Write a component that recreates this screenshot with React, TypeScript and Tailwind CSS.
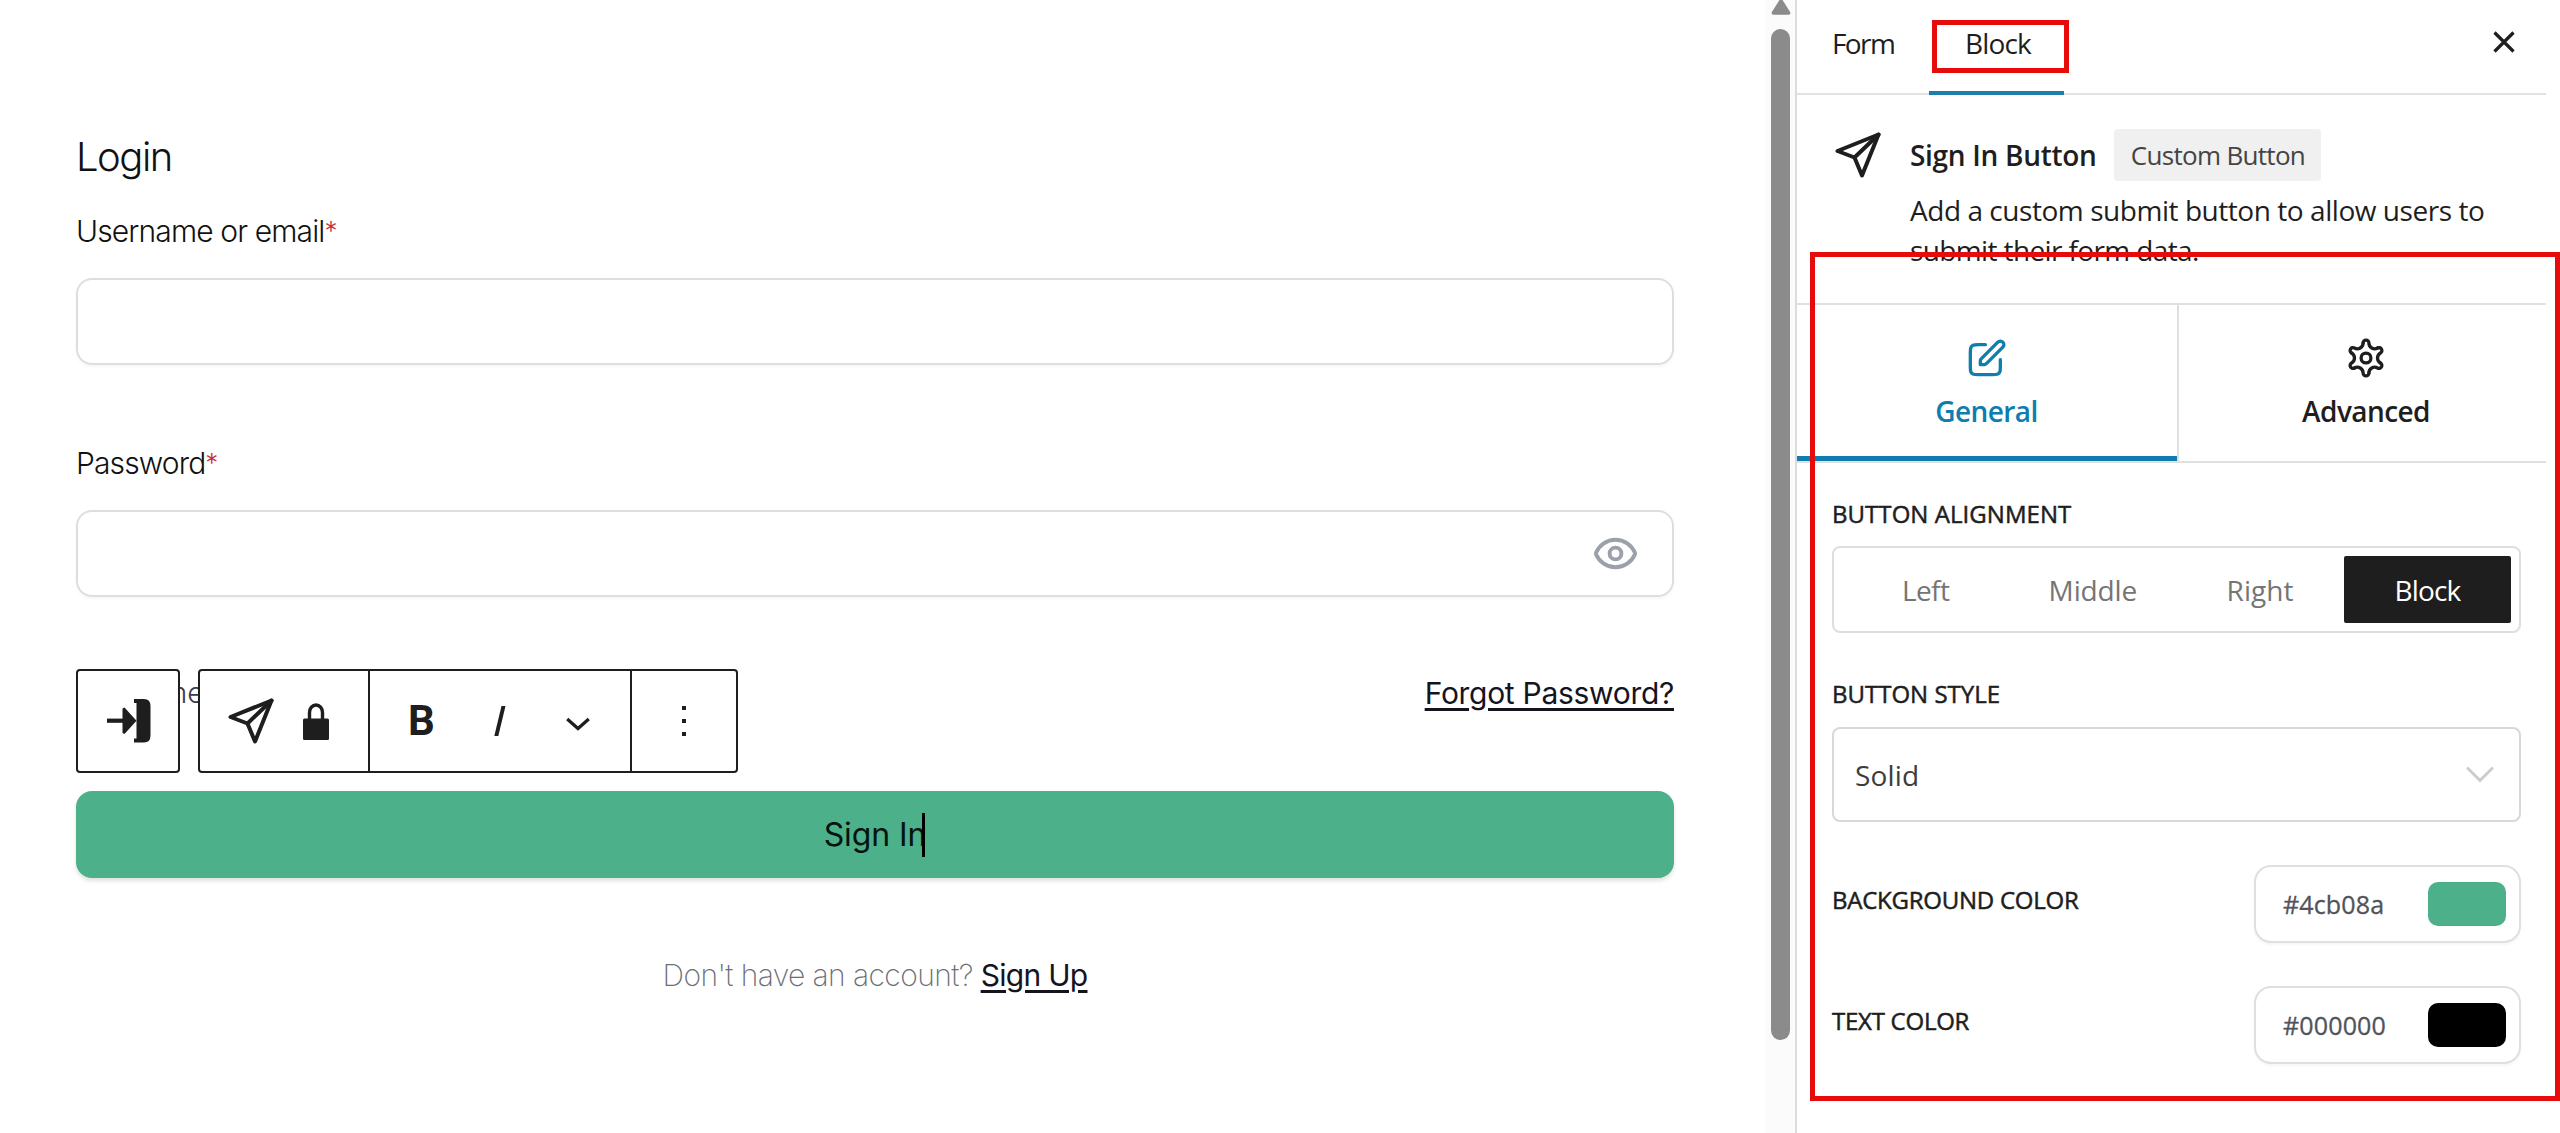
import { Eye } from "lucide-react";
import clsx from "clsx";

function PlaneIcon() {
  return (
    <svg viewBox="0 0 46 46" className="w-[46px] h-[46px] shrink-0" fill="none" stroke="#1e1e1e" strokeWidth="4" strokeLinejoin="round" strokeLinecap="round">
      <path d="M43.5 2.5 L2.5 19 L19.5 25.5 L27 43.5 Z" />
      <path d="M19.5 25.5 L43.5 2.5" />
    </svg>
  );
}

function LoginIcon() {
  return (
    <svg viewBox="0 0 44 44" className="ml-px w-[44px] h-[44px]" fill="#1e1e1e">
      <path d="M0 19.6h16.5v4.2H0z" />
      <path d="M15.5 9.5 17.5 8.4 29.5 21.7 17.5 35 15.5 34z" />
      <path d="M27 0h10q6.5 0 6.5 7v29.5q0 7-6.5 7H27v-4h2.500V4H27z" />
    </svg>
  );
}

function LockIcon() {
  return (
    <svg viewBox="0 0 26 37" className="w-[26px] h-[37px]">
      <path d="M6.500 17V9.500a6.500 7.500 0 0 1 13 0V17" fill="none" stroke="#1e1e1e" strokeWidth="3.400" />
      <rect y="15.500" width="26" height="21.500" rx="1.500" fill="#1e1e1e" />
    </svg>
  );
}

function EditIcon() {
  return (
    <svg viewBox="0 0 24 24" className="w-[40px] h-[40px]" fill="none" stroke="currentColor" strokeWidth="2" strokeLinecap="round" strokeLinejoin="round">
      <path d="M11 4H6.800C5.120 4 4.280 4 3.638 4.327a3 3 0 0 0-1.311 1.311C2 6.280 2 7.120 2 8.800v8.400c0 1.680 0 2.520.327 3.162a3 3 0 0 0 1.311 1.311C4.280 22 5.120 22 6.800 22h8.400c1.680 0 2.520 0 3.162-.327a3 3 0 0 0 1.311-1.311C20 19.720 20 18.880 20 17.200V13" />
      <path d="M8 16h1.675c.489 0 .733 0 .964-.055a2 2 0 0 0 .578-.240c.201-.123.374-.296.720-.642L21.500 5.500a2.121 2.121 0 0 0-3-3L8.937 12.063c-.346.346-.519.519-.642.720a2 2 0 0 0-.240.578C8 13.592 8 13.836 8 14.325V16Z" />
    </svg>
  );
}

// one lobe plus the valley to the next, repeated every 60deg
function GearIcon() {
  return (
    <svg viewBox="-20 -20 40 40" className="w-[40px] h-[40px]" fill="none" stroke="currentColor" strokeWidth="3.300" strokeLinecap="round">
      {[0, 60, 120, 180, 240, 300].map((deg) => (
        <path key={deg} transform={`rotate(${deg})`} d="M-2.900-15a2.900 2.900 0 0 1 5.800 0C2.900-10.500 7.640-7.760 11.540-10.010" />
      ))}
      <circle r="4.900" />
    </svg>
  );
}

function Field({ label, className, children }: { label: string; className?: string; children?: React.ReactNode }) {
  return (
    <div className={className}>
      <div className="flex h-9 items-center text-[30px] font-light leading-9 text-[#111]">
        <span className="tracking-[-0.87px]">{label}</span>
        <span className="text-[26px] text-[#c5303c]">*</span>
      </div>
      <div className="mt-[29px] flex h-[87px] items-center justify-end rounded-[16px] border-2 border-[#dedede] pr-[33px] shadow-[0_2px_3px_rgba(0,0,0,0.04)]">
        {children}
      </div>
    </div>
  );
}

function Toolbar() {
  return (
    <div className="absolute left-0 -top-[6px] flex h-[104px] gap-[18px]">
      <div className="flex w-[104px] items-center justify-center rounded-[4px] border-2 border-[#1e1e1e] bg-white">
        <LoginIcon />
      </div>
      <div className="flex w-[540px] rounded-[4px] border-2 border-[#1e1e1e] bg-white">
        <div className="flex w-[170px] items-center border-r-2 border-[#1e1e1e] pl-[28px]">
          <PlaneIcon />
          <span className="ml-[29px]">
            <LockIcon />
          </span>
        </div>
        <div className="flex w-[262px] items-center border-r-2 border-[#1e1e1e] pl-[38px]">
          <span className="w-[24px] font-['Roboto',sans-serif] text-[42px] font-bold leading-none text-[#1e1e1e]">B</span>
          <svg viewBox="0 0 12 30" className="ml-[62px] h-[30px] w-[12px]">
            <path d="M7.500 0H11.500L4.300 30H0.300z" fill="#1e1e1e" />
          </svg>
          <svg viewBox="0 0 24 14" className="ml-[60px] mt-[5px] h-[14px] w-[24px]" fill="none" stroke="#1e1e1e" strokeWidth="3.200">
            <path d="M1.200 2 12 11.500 22.800 2" />
          </svg>
        </div>
        <div className="flex flex-1 flex-col items-center justify-center gap-[9px]">
          <i className="size-[4px] bg-[#1e1e1e]" />
          <i className="size-[4px] bg-[#1e1e1e]" />
          <i className="size-[4px] bg-[#1e1e1e]" />
        </div>
      </div>
    </div>
  );
}

function LoginForm() {
  return (
    <main className="flex w-[1765px] flex-col pl-[76px] pr-[91px] pt-[133px] font-['Inter',sans-serif]">
      <h1 className="text-[40px] font-light leading-[48px] tracking-[-1.5px] text-[#111]">Login</h1>
      <Field label="Username or email" className="mt-[32px]" />
      <Field label="Password" className="mt-[80px]">
        <Eye className="size-[47px] text-[#9ca0aa]" strokeWidth={2} />
      </Field>
      <div className="relative mt-[78px] flex h-9 items-center justify-end">
        <span className="absolute left-[86px] text-[29px] font-light leading-9 text-[#3b3b52]">me</span>
        <a className="text-[30px] leading-9 tracking-[-0.3px] text-[#14141f] underline decoration-[2.5px] underline-offset-[4px]">Forgot Password?</a>
        <Toolbar />
      </div>
      <div className="mt-[80px] flex h-[87px] items-center justify-center rounded-[16px] bg-[#4cb08a] shadow-[0_3px_4px_rgba(0,0,0,0.12)]">
        <span className="-ml-px text-[32px] leading-none tracking-[-0.1px] text-[#06140f]">Sign In</span>
        <span className="-ml-[4px] h-[44px] w-[3px] bg-black" />
      </div>
      <p className="mt-[79px] text-center text-[30px] font-extralight leading-9 tracking-[-0.58px] text-[#6b6f76]">
        Don't have an account?{" "}
        <a className="font-normal tracking-[-0.7px] text-[#14141f] underline decoration-[2.5px] underline-offset-[4px]">Sign Up</a>
      </p>
    </main>
  );
}

function Scrollbar() {
  return (
    <div className="flex w-[30px] flex-col items-center bg-[#fbfbfb]">
      <svg viewBox="0 0 20 15" className="ml-px h-[15px] w-[20px]">
        <path d="M10-1 18.500 12.500Q19 14 17.500 14h-15Q1 14 1.500 12.500z" fill="#8b8b8b" stroke="#8b8b8b" strokeWidth="1.500" strokeLinejoin="round" />
      </svg>
      <div className="mt-[14px] h-[1011px] w-[19px] rounded-full bg-[#8b8b8b]" />
    </div>
  );
}

function SectionLabel({ className, children }: { className?: string; children: React.ReactNode }) {
  return (
    <div className={clsx("text-[24px] font-medium leading-8 text-[#1e1e1e] [-webkit-text-stroke:0.5px_#1e1e1e]", className)}>
      {children}
    </div>
  );
}

function ColorRow({ label, labelClass, value, swatch, className }: { label: string; labelClass: string; value: string; swatch: string; className?: string }) {
  return (
    <div className={clsx("flex h-[78px] items-center justify-between", className)}>
      <SectionLabel className={clsx("mb-[8px]", labelClass)}>{label}</SectionLabel>
      <div className="flex h-[78px] w-[267px] items-center justify-between rounded-[17px] border-2 border-[#dfdfdf] pl-[27px] pr-[13px] shadow-[0_2px_3px_rgba(0,0,0,0.04)]">
        <span className="text-[25px] tracking-[0.15px] text-[#50545a] [-webkit-text-stroke:0.3px_#50545a]">{value}</span>
        <span className={clsx("h-[44px] w-[78px] rounded-[10px]", swatch)} />
      </div>
    </div>
  );
}

const alignments = [
  { label: "Left", tracking: "tracking-[-0.6px]" },
  { label: "Middle", tracking: "tracking-[-0.12px]" },
  { label: "Right", tracking: "tracking-[0.07px]" },
];

function Sidebar() {
  return (
    <aside className="w-[765px] border-l-2 border-[#dcdcdc] font-['Open_Sans',sans-serif] text-[28px] leading-[40px] text-[#1e1e1e]">
      <div className="mr-[14px]">
        <header className="flex h-[95px] border-b-2 border-[#e2e2e2] pl-[35px]">
          <span className="w-[97px] pt-[23px] tracking-[-1.6px]">Form</span>
          <span className="z-10 h-[95px] w-[135px] border-b-4 border-[#1c7fab] pl-[36px] pt-[23px] tracking-[-0.85px]">Block</span>
          <svg viewBox="0 0 22 22" className="ml-auto mr-[31px] mt-[31px] size-[22px]" stroke="#1e1e1e" strokeWidth="3.200">
            <path d="M1.500 1.500 20.500 20.500M20.500 1.500 1.500 20.500" />
          </svg>
        </header>

        <section className="flex h-[208px] pl-[38px] pt-[37px]">
          <PlaneIcon />
          <div className="ml-[29px] -mt-[3px]">
            <div className="flex items-center">
              <span className="text-[28px] font-semibold tracking-[-0.3px]">Sign In Button</span>
              <span className="ml-[18px] flex h-[52px] w-[207px] items-center justify-center rounded-[4px] bg-[#f0f0f0] text-[26px] tracking-[-0.7px] text-[#444]">
                Custom Button
              </span>
            </div>
            <p className="mt-[9px] w-[600px] whitespace-nowrap tracking-[-0.45px]">
              Add a custom submit button to allow users to
              <br />
              <span className="tracking-[-0.62px]">submit their form data.</span>
            </p>
          </div>
        </section>

        <nav className="flex h-[160px] border-y-2 border-[#e0e0e0] text-center font-semibold">
          <div className="flex w-[380px] flex-col items-center border-b-[5px] border-[#0f7dad] pr-px pt-[33px] tracking-[-0.6px] text-[#0f7dad]">
            <EditIcon />
            <span className="mt-[13px]">General</span>
          </div>
          <div className="flex flex-1 flex-col items-center border-l-2 border-[#e0e0e0] pl-[7px] pt-[33px] tracking-[-0.57px]">
            <GearIcon />
            <span className="mt-[13px]">Advanced</span>
          </div>
        </nav>
      </div>

      <div className="pl-[35px] pr-[39px] pt-[35px]">
        <SectionLabel className="tracking-[0.05px]">BUTTON ALIGNMENT</SectionLabel>
        <div className="mt-[16px] flex h-[87px] rounded-[8px] border-2 border-[#dedede] p-[8px] text-center text-[#757575]">
          {alignments.map((a) => (
            <span key={a.label} className={clsx("flex-1 pt-[14px]", a.tracking)}>
              {a.label}
            </span>
          ))}
          <span className="flex-1 rounded-[2px] bg-[#1e1e1e] pt-[14px] tracking-[-0.85px] text-white">Block</span>
        </div>

        <SectionLabel className="mt-[45px]">BUTTON STYLE</SectionLabel>
        <div className="mt-[17px] flex h-[95px] items-center justify-between rounded-[8px] border-2 border-[#d8d8d8] pl-[21px] pr-[25px]">
          <span className="text-[#3c3c3c] tracking-[0.17px]">Solid</span>
          <svg viewBox="0 0 28 16" className="h-[16px] w-[28px]" fill="none" stroke="#cccccc" strokeWidth="3">
            <path d="M2 1.500 14 13.500 26 1.500" strokeLinecap="round" />
          </svg>
        </div>

        <ColorRow label="BACKGROUND COLOR" labelClass="tracking-[-0.24px]" value="#4cb08a" swatch="bg-[#4cb08a]" className="mt-[43px]" />
        <ColorRow label="TEXT COLOR" labelClass="tracking-[-0.25px]" value="#000000" swatch="bg-black" className="mt-[43px]" />
      </div>
    </aside>
  );
}

export default function App() {
  return (
    <div className="relative flex h-[1133px] w-[2560px] overflow-hidden bg-white">
      <LoginForm />
      <Scrollbar />
      <Sidebar />
      {/* highlight frames */}
      <div className="absolute left-[1932px] top-[20px] z-20 h-[53px] w-[137px] border-[5px] border-[#e60c0c]" />
      <div className="absolute left-[1810px] top-[252px] z-20 h-[849px] w-[750px] border-[5px] border-[#e60c0c]" />
    </div>
  );
}
